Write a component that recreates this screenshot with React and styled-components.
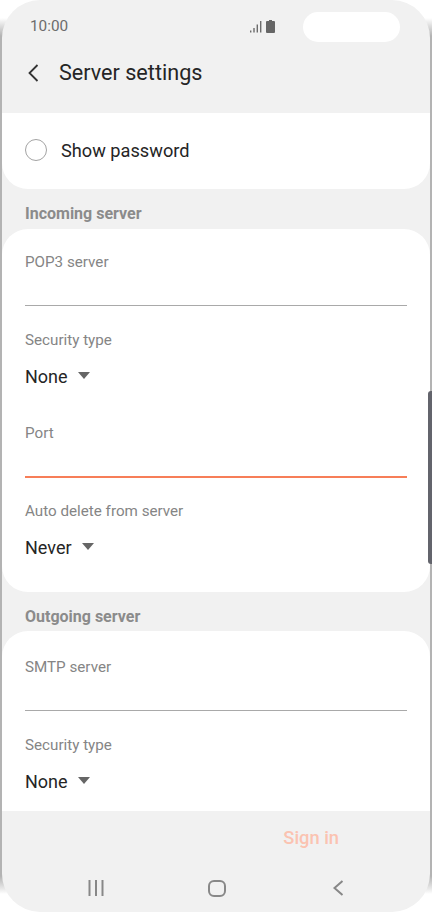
import { createGlobalStyle } from 'styled-components';
import styled from 'styled-components';

const GlobalStyle = createGlobalStyle`
  html, body {
    margin: 0;
    padding: 0;
    background: #fff;
    font-family: Roboto, "Liberation Sans", sans-serif;
  }
`;

const Frame = styled.div`
  position: relative;
  width: 432px;
  height: 912px;
  box-sizing: border-box;
  padding: 0 2px;
  background: linear-gradient(#fff 18px, #b3b3b3 36px, #b3b3b3 876px, #fff 894px);
  overflow: hidden;
`;

const SideKey = styled.div`
  position: absolute;
  top: 391px;
  right: 0;
  width: 4px;
  height: 173px;
  border-radius: 3px 0 0 3px;
  background: #63646c;
`;

const Screen = styled.div`
  height: 100%;
  display: flex;
  flex-direction: column;
  border-radius: 38px;
  background: #f1f1f1;
  overflow: hidden;
`;

const StatusBar = styled.div`
  height: 53px;
  flex: none;
  display: flex;
  align-items: center;
  padding: 0 30px 0 28px;
  box-sizing: border-box;
  color: #6c6c6c;
  font-size: 15.3px;
`;

const Clock = styled.span`
  flex: 1;
  margin-top: -1px;
`;

const StatusIcons = styled.div`
  display: flex;
  align-items: center;
  gap: 4px;
  margin-right: 28px;
`;

const CameraPill = styled.div`
  width: 97px;
  height: 30px;
  border-radius: 15px;
  background: #fff;
`;

const Header = styled.div`
  height: 60px;
  flex: none;
  display: flex;
  align-items: center;
  gap: 17px;
  padding: 0 0 21px 25px;
  box-sizing: border-box;
  color: #252525;
  font-size: 21.6px;
`;

const Content = styled.div`
  flex: 1;
  min-height: 0;
  overflow: hidden;
  display: flex;
  flex-direction: column;
`;

const ToggleCard = styled.div`
  flex: none;
  height: 76px;
  box-sizing: border-box;
  padding: 0 0 2px 23px;
  display: flex;
  align-items: center;
  gap: 14px;
  background: #fff;
  border-radius: 0 0 26px 26px;
  color: #252525;
  font-size: 18.2px;
`;

const Radio = styled.span`
  width: 20px;
  height: 20px;
  border: 1px solid #a3a3a3;
  border-radius: 50%;
`;

const SectionLabel = styled.div`
  flex: none;
  height: ${(p) => p.$height}px;
  box-sizing: border-box;
  display: flex;
  align-items: center;
  padding: ${(p) => p.$top}px 0 0 23px;
  color: #8b8b8b;
  font-size: 16px;
  font-weight: 700;
`;

const Card = styled.div`
  flex: none;
  background: #fff;
  border-radius: ${(p) => (p.$open ? '26px 26px 0 0' : '26px')};
  padding: 0 23px;
`;

const InputField = styled.div`
  height: ${(p) => p.$height}px;
  box-sizing: border-box;
  padding-top: ${(p) => p.$top}px;
  color: #858585;
  font-size: 15.2px;
`;

const FieldLine = styled.div`
  height: ${(p) => (p.$active ? 2 : 1)}px;
  margin-top: 34px;
  background: ${(p) => (p.$active ? '#f77e58' : '#a9a9a9')};
`;

const SelectField = styled.div`
  height: ${(p) => p.$height}px;
  box-sizing: border-box;
  padding-top: ${(p) => p.$top}px;
  color: #858585;
  font-size: 15.2px;
`;

const SelectValue = styled.div`
  display: flex;
  align-items: center;
  gap: 10px;
  margin-top: 17px;
  color: #252525;
  font-size: 18px;
`;

const Caret = styled.span`
  width: 0;
  height: 0;
  margin-top: -3px;
  border-left: 6px solid transparent;
  border-right: 6px solid transparent;
  border-top: 7px solid #666;
`;

const Footer = styled.div`
  flex: none;
  height: 101px;
  display: flex;
  flex-direction: column;
`;

const SignInRow = styled.div`
  height: 53px;
  display: flex;
  align-items: center;
  justify-content: flex-end;
  padding-right: 91px;
  color: #fbc3b1;
  font-size: 18.3px;
  font-weight: 500;
`;

const NavBar = styled.div`
  height: 48px;
  display: grid;
  grid-template-columns: repeat(3, 121px);
  padding-left: 33px;
`;

const NavItem = styled.div`
  display: flex;
  align-items: flex-start;
  justify-content: center;
  padding-top: 16px;
`;

function SignalBattery() {
  return (
    <StatusIcons>
      <svg width="12" height="13" viewBox="0 0 12 13" fill="#6c6c6c">
        <rect x="0" y="10.5" width="1.4" height="2" />
        <rect x="3.3" y="8" width="1.4" height="4.5" />
        <rect x="6.6" y="4.5" width="1.4" height="8" />
        <rect x="10" y="1" width="1.4" height="11.5" />
      </svg>
      <svg width="9" height="13" viewBox="0 0 9 13" fill="#666">
        <path d="M3 0h3v1h2a1 1 0 0 1 1 1v10a1 1 0 0 1-1 1H1a1 1 0 0 1-1-1V2a1 1 0 0 1 1-1h2z" />
      </svg>
    </StatusIcons>
  );
}

function App() {
  return (
    <>
      <GlobalStyle />
      <Frame>
        <Screen>
          <StatusBar>
            <Clock>10:00</Clock>
            <SignalBattery />
            <CameraPill />
          </StatusBar>
          <Header>
            <svg width="15" height="20" viewBox="0 0 15 20" fill="none" stroke="#333" strokeWidth="1.8">
              <path d="M10.5 2 2.5 10l8 8" />
            </svg>
            Server settings
          </Header>
          <Content>
            <ToggleCard>
              <Radio />
              Show password
            </ToggleCard>
            <SectionLabel $height={40} $top={9}>Incoming server</SectionLabel>
            <Card>
              <InputField $height={77} $top={24}>
                POP3 server
                <FieldLine />
              </InputField>
              <SelectField $height={94} $top={25}>
                Security type
                <SelectValue>
                  None
                  <Caret />
                </SelectValue>
              </SelectField>
              <InputField $height={78} $top={24}>
                Port
                <FieldLine $active />
              </InputField>
              <SelectField $height={114} $top={24}>
                Auto delete from server
                <SelectValue>
                  Never
                  <Caret />
                </SelectValue>
              </SelectField>
            </Card>
            <SectionLabel $height={39} $top={10}>Outgoing server</SectionLabel>
            <Card $open>
              <InputField $height={80} $top={27}>
                SMTP server
                <FieldLine />
              </InputField>
              <SelectField $height={100} $top={25}>
                Security type
                <SelectValue>
                  None
                  <Caret />
                </SelectValue>
              </SelectField>
            </Card>
          </Content>
          <Footer>
            <SignInRow>Sign in</SignInRow>
            <NavBar>
              <NavItem>
                <svg width="16" height="16" viewBox="0 0 16 16" fill="none" stroke="#888" strokeWidth="2">
                  <path d="M1.5 0v16M8 0v16M14.5 0v16" />
                </svg>
              </NavItem>
              <NavItem>
                <svg width="18" height="17" viewBox="0 0 18 17" fill="none" stroke="#888" strokeWidth="2">
                  <rect x="1" y="1" width="16" height="15" rx="5" />
                </svg>
              </NavItem>
              <NavItem>
                <svg width="12" height="16" viewBox="0 0 12 16" fill="none" stroke="#888" strokeWidth="2">
                  <path d="M10.5 1 2.5 8l8 7" />
                </svg>
              </NavItem>
            </NavBar>
          </Footer>
        </Screen>
        <SideKey />
      </Frame>
    </>
  );
}

export default App;
